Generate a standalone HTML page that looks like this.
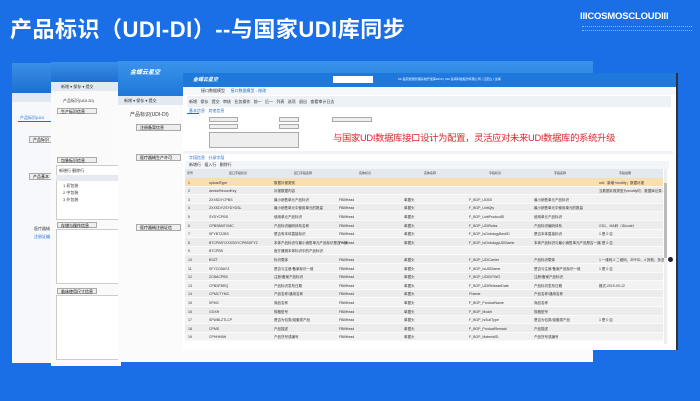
<!DOCTYPE html>
<html><head><meta charset="utf-8"><style>
*{margin:0;padding:0;box-sizing:border-box}
body{width:700px;height:401px;overflow:hidden;background:#1a6fe6;font-family:"Liberation Sans","Noto Sans CJK SC",sans-serif;position:relative}
.a{position:absolute}
.t{font-size:4px;color:#333;white-space:nowrap;position:absolute}
.win{position:absolute;background:#fff;overflow:hidden}
.hdr{position:absolute;left:0;right:0;top:0;background:linear-gradient(#3b8fe6,#1e6fd0)}
.logo{position:absolute;color:#fff;font-size:6px;font-weight:bold;font-style:italic}
.box{position:absolute;border:1px solid #aaa;background:#eee;font-size:4px;padding-left:3px}
</style></head><body>
<div class="a" style="left:10px;top:12px;font-size:22px;font-weight:bold;color:#fff;letter-spacing:0.5px;font-family:'Liberation Sans','Noto Sans CJK SC',sans-serif">产品标识（UDI-DI）--与国家UDI库同步</div>
<div class="a" style="left:580px;top:11px;font-size:9.5px;font-weight:bold;color:#fff;letter-spacing:-0.2px">IIICOSMOSCLOUDIII</div>
<div class="a" style="left:582px;top:26px;width:110px;border-top:1px dotted #8fbaf5"></div>
<div class="a" style="left:582px;top:30px;width:110px;border-top:1px dotted #8fbaf5"></div>

<!-- window1 -->
<div class="win" style="left:12px;top:63px;width:60px;height:300px;background:#f6f8fb">
 <div class="hdr" style="height:30px"></div>
 <div class="a" style="left:0;top:30px;width:60px;height:9px;background:#e3e9f1"></div>
 <div class="t" style="left:8px;top:52px;color:#1e6fd0">产品标识(UDI</div>
 <div class="a" style="left:6px;top:58px;width:54px;height:1px;background:#1e6fd0"></div>
 <div class="box" style="left:17px;top:73px;width:40px;height:7px">产品标识</div>
 <div class="box" style="left:17px;top:110px;width:40px;height:7px">产品基本</div>
 <div class="t" style="left:22px;top:163px">医疗器械</div>
 <div class="t" style="left:22px;top:171px;color:#1e6fd0">注册证编</div>
</div>
<!-- window2 -->
<div class="win" style="left:51px;top:62px;width:70px;height:304px;background:#fafafa">
 <div class="hdr" style="height:20px"></div>
 <div class="a" style="left:0;top:20px;width:70px;height:9px;background:#e3e9f1"></div>
 <div class="t" style="left:10px;top:22px">新增 ▾ 保存 ▾ 提交</div>
 <div class="t" style="left:12px;top:36px">产品标识(UDI-DI)</div>
 <div class="box" style="left:6px;top:46px;width:40px;height:6px">生产标识信息</div>
 <div class="box" style="left:6px;top:95px;width:40px;height:6px">包装标识信息</div>
 <div class="a" style="left:5px;top:103px;width:65px;height:55px;border:1px solid #ccc;background:#fff"></div>
 <div class="t" style="left:8px;top:106px">新增行 删除行</div>
 <div class="a" style="left:5px;top:113px;width:65px;height:6px;background:#e6e9ee"></div>
 <div class="t" style="left:12px;top:121px">1 初包装</div><div class="t" style="left:12px;top:128px">2 中包装</div><div class="t" style="left:12px;top:135px">3 外包装</div>
 <div class="box" style="left:6px;top:160px;width:40px;height:6px">存储与操作信息</div>
 <div class="a" style="left:5px;top:167px;width:65px;height:55px;border:1px solid #ccc;background:#fff"></div>
 <div class="box" style="left:6px;top:226px;width:40px;height:6px">临床使用尺寸信息</div>
 <div class="a" style="left:5px;top:233px;width:65px;height:65px;border:1px solid #ccc;background:#fff"></div>
</div>
<!-- window3 -->
<div class="win" style="left:118px;top:61px;width:475px;height:301px;background:#fbfbfb">
 <div class="hdr" style="height:35px;background:linear-gradient(#3a93ea,#1f78d8)"></div>
 <div class="logo" style="left:12px;top:6px">金蝶云星空</div>
 <div class="a" style="left:0;top:35px;width:475px;height:9px;background:#e3e9f1"></div>
 <div class="t" style="left:6px;top:37px">新增 ▾ 保存 ▾ 提交</div>
 <div class="t" style="left:12px;top:50px;font-size:5px">产品标识(UDI-DI)</div>
 <div class="box" style="left:18px;top:63px;width:45px;height:7px">注册备案信息</div>
 <div class="box" style="left:18px;top:93px;width:45px;height:7px">医疗器械生产许可</div>
 <div class="box" style="left:18px;top:163px;width:45px;height:7px">医疗器械注册证信</div>
</div>
<!-- window4 -->
<div class="win" style="left:183px;top:73px;width:495px;height:277px;border-right:2px solid #333">
 <div class="hdr" style="height:14px;background:#1f78dc"></div>
 <div class="logo" style="left:10px;top:3px;font-size:5px">金蝶云星空</div>
 <div class="a" style="left:150px;top:3px;width:40px;height:7px;background:#fff"></div>
 <div class="t" style="left:215px;top:4px;color:#fff;font-size:3px">KF-医药质量管理系统开发库2019 | 192 蓝海科技股份有限公司 | 汪宏山 | 注销</div>
 <div class="a" style="left:0;top:14px;width:495px;height:8px;background:#f5f7fa"></div>
 <div class="t" style="left:18px;top:15px">接口数据模型 &nbsp; &nbsp; <span style="color:#1e6fd0">接口数据模型 - 修改</span></div>
 <div class="a" style="left:4px;top:23px;width:484px;height:11px;background:#eef1f5"></div>
 <div class="t" style="left:6px;top:26px">新增 &nbsp; 保存 &nbsp; 提交 &nbsp; 审核 &nbsp; 业务操作 &nbsp; 前一 &nbsp; 后一 &nbsp; 列表 &nbsp; 选项 &nbsp; 退出 &nbsp; 查看审计日志</div>
 <div class="t" style="left:6px;top:35px;color:#1e6fd0">基本信息 &nbsp; 其他信息</div>
 <div class="a" style="left:4px;top:40px;width:12px;height:1px;background:#1e6fd0"></div>
 <div class="box" style="left:26px;top:44px;width:29px;height:5px"></div>
 <div class="box" style="left:26px;top:51px;width:29px;height:5px"></div>
 <div class="box" style="left:26px;top:59px;width:90px;height:16px"></div>
 <div class="box" style="left:96px;top:44px;width:20px;height:5px"></div>
 <div class="box" style="left:96px;top:51px;width:20px;height:5px"></div>
 <div class="box" style="left:149px;top:44px;width:40px;height:5px"></div>
 <div class="a" style="left:150px;top:57px;color:#d9262b;font-size:9.3px;white-space:nowrap;letter-spacing:-0.3px">与国家UDI数据库接口设计为配置，灵活应对未来UDI数据库的系统升级</div>
 <div class="a" style="left:0;top:78px;width:490px;height:3px;background:#f0f2f5"></div>
 <div class="t" style="left:6px;top:82px;color:#1e6fd0">字段信息 &nbsp; 分录字段</div>
 <div class="a" style="left:2px;top:88px;width:484px;height:8px;background:#f2f5fa"></div>
 <div class="t" style="left:6px;top:89px">新增行 &nbsp; 插入行 &nbsp; 删除行</div>
 <div class="a" style="left:2px;top:96px;width:478px;height:9px;background:#e4e8ef"></div>
 <div class="a" id="rows" style="left:2px;top:105px;width:478px"></div>
 <div class="a" style="left:481px;top:96px;width:3px;height:175px;background:#eee"></div>
 <div class="a" style="left:481px;top:110px;width:3px;height:75px;background:#bbb"></div>
 <div class="a" style="left:485px;top:184px;width:5px;height:5px;border-radius:50%;background:#223"></div>
</div>
<script>
var d=[["uploadType","数据补报类别","","","","","udi：新增+modify；数据补报"],["deviceRecordKey","补报数据内容","","","","","当数据补报类型为modify时，数据库记录..."],["ZXXSDYCPBS","最小销售单元产品标识","FBillHead","单据头","F_BGP_UDIDI","最小销售单元产品标识",""],["ZXXSDYZSYDYDSL","最小销售单元中使用单元的数量","FBillHead","单据头","F_BGP_UnitQty","最小销售单元中使用单元的数量",""],["SYDYCPBS","使用单元产品标识","FBillHead","单据头","F_BGP_UnitProductID","使用单元产品标识",""],["CPBSBMTXMC","产品标识编码体系名称","FBillHead","单据头","F_BGP_UDIRules","产品标识编码体系","GS1，MA码（IDcode）"],["SFYBTZJBS","是否有本体直接标识","FBillHead","单据头","F_BGP_IsOntologyBectID","是否本体直接标识","1 是 0 否"],["BTCPBSYZXXSDYCPBSSFYZ","本体产品标识与最小销售单元产品标识是否一致","FBillHead","单据头","F_BGP_IsOntologyUDISame","本体产品标识与最小销售单元产品是否一致","1 是 0 否"],["BTCPBS","医疗器械本体标识中的产品标识","","","","",""],["BSZT","标识载体","FBillHead","单据头","F_BGP_UDICarrier","产品标识载体","1 一维码,2 二维码，3RFID，4 其他，多选"],["SFYZCBAYZ","是否与注册/备案标识一致","FBillHead","单据头","F_BGP_IsUDISame","是否与注册/备案产品标识一致","1 是 0 否"],["ZCBACPBS","注册/备案产品标识","FBillHead","单据头","F_BGP_UDIDITWO","注册/备案产品标识",""],["CPBSFBRQ","产品标识发布日期","FBillHead","单据头","F_BGP_UDIReleaseDate","产品标识发布日期","格式:2019-09-12"],["CPMCTYMC","产品名称/通用名称","FBillHead","单据头","FName","产品名称/通用名称",""],["SPMC","商品名称","FBillHead","单据头","F_BGP_ProductName","商品名称",""],["GGXH","规格型号","FBillHead","单据头","F_BGP_Model","规格型号",""],["SFWBLZTLCP","是否为包类/组套类产品","FBillHead","单据头","F_BGP_IsSuitType","是否为包类/组套类产品","1 是 0 否"],["CPMS","产品描述","FBillHead","单据头","F_BGP_ProductRemark","产品描述",""],["CPHHHBH","产品货号或编号","FBillHead","单据头","F_BGP_MaterialID","产品货号或编号",""]];
var x=[2,24,89,154,219,284,349,414],h='';
var hd=["序号","接口字段标识","接口字段名称","实体标识","实体名称","字段标识","字段名称","字段说明"];
hd.forEach(function(s,j){h+='<div class="t" style="top:-7px;left:'+(x[j]+ (j?20:0))+'px;font-size:3px">'+s+'</div>'});
d.forEach(function(r,i){var y=i*8.6;var bg=i==0?'#f9dfb0':(i%2?'#ececec':'#f2f2f2');
h+='<div class="a" style="left:0;top:'+y+'px;width:478px;height:8.6px;background:'+bg+';border-bottom:1px solid #fafafa"></div>';
h+='<div class="t" style="left:3px;top:'+(y+2.5)+'px;font-size:3.5px">'+(i+1)+'</div>';
r.forEach(function(s,j){h+='<div class="t" style="left:'+x[j+1]+'px;top:'+(y+2.5)+'px;font-size:3.5px">'+s+'</div>'});});
document.getElementById('rows').innerHTML=h;
</script>
</body></html>
